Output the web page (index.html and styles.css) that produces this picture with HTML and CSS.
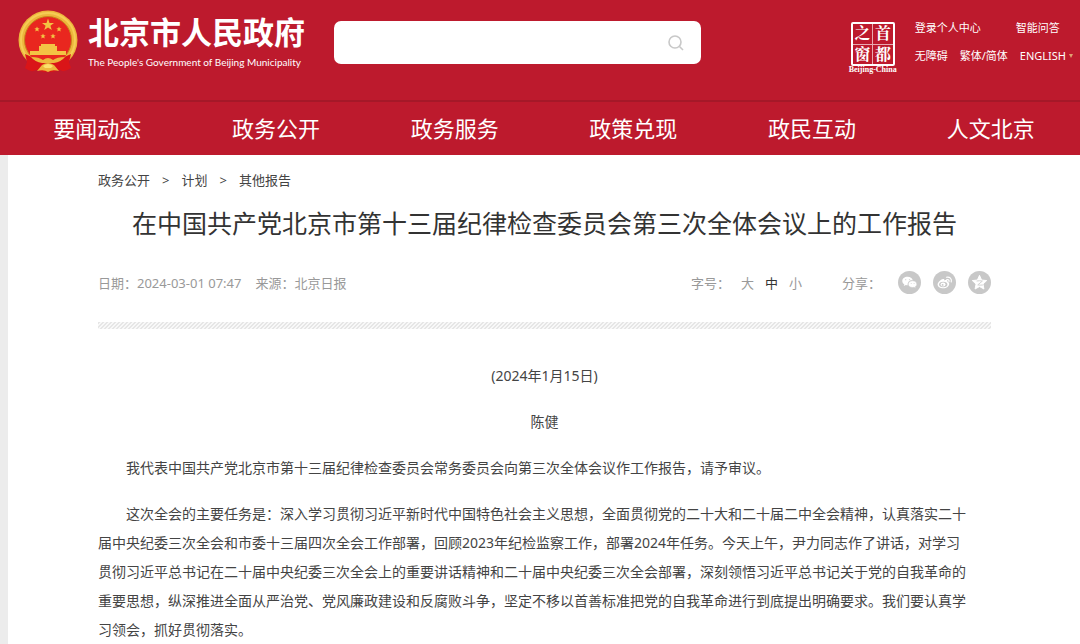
FILE: index.html
```html
<!DOCTYPE html>
<html lang="zh-CN">
<head>
<meta charset="utf-8">
<meta name="viewport" content="width=device-width, initial-scale=1">
<title>在中国共产党北京市第十三届纪律检查委员会第三次全体会议上的工作报告</title>
<link rel="stylesheet" href="styles.css">
</head>
<body>
<header class="site-header">
  <div class="topbar">
    <a class="brand" href="#">
      <svg class="emblem" viewBox="0 0 60 64" aria-hidden="true">
        <circle cx="30" cy="30" r="29.500" fill="#edb63c"/>
        <circle cx="30" cy="30" r="27" fill="none" stroke="#f5cd55" stroke-width="2"/>
        <circle cx="30" cy="30" r="23.500" fill="#e9271f" stroke="#c9851d" stroke-width="1"/>
        <g fill="#f3c344">
          <path d="M30 8.500 L31.500 13 L36 13 L32.400 15.800 L33.800 20 L30 17.500 L26.200 20 L27.600 15.800 L24 13 L28.500 13Z"/>
          <path d="M19 16.500l.8 1.800 1.900.1-1.500 1.200.5 1.900-1.700-1-1.700 1 .5-1.900-1.500-1.200 1.900-.1z"/>
          <path d="M41 16.500l.8 1.800 1.900.1-1.500 1.200.5 1.900-1.700-1-1.700 1 .5-1.900-1.500-1.200 1.900-.1z"/>
          <path d="M25 23.500l.8 1.800 1.900.1-1.500 1.200.5 1.900-1.700-1-1.700 1 .5-1.900-1.500-1.200 1.900-.1z"/>
          <path d="M35 23.500l.8 1.800 1.900.1-1.500 1.200.5 1.900-1.700-1-1.700 1 .5-1.900-1.500-1.200 1.900-.1z"/>
          <path d="M23 34h14v2h2v2H21v-2h2zM21 38h18v3h9v4H12v-4h9z"/>
        </g>
        <path d="M12 45h36l-3 3H15z" fill="#e9271f"/>
        <path d="M7 44 Q14 47 18 49 Q22 47 26 51 L30 53 L34 51 Q38 47 42 49 Q46 47 53 44 L51 52 L53 58 Q46 63 42 60 L34 62 H26 L18 60 Q13 63 7 58 L9 52Z" fill="#da1518"/>
        <path d="M13 47 Q21 47 25 50 Q30 46 35 50 Q39 47 47 47 Q43 52 36 53 H24 Q17 52 13 47Z" fill="#edb83d"/>
        <path d="M19 61 L24 55 Q30 51 36 55 L41 61 Q34 59 30 62 Q26 59 19 61Z" fill="#edb83d"/>
        <path d="M25 56 Q30 52 35 56 L33 58 H27Z" fill="#fbe06c"/>
      </svg>
      <span class="brand-text">
        <span class="brand-cn">北京市人民政府</span>
        <span class="brand-en">The People's Government of Beijing Municipality</span>
      </span>
    </a>
    <form class="search" role="search">
      <input class="search-input" type="text" aria-label="搜索">
      <button class="search-button" type="button" aria-label="搜索">
        <svg viewBox="0 0 16 16" width="16" height="16" fill="none" stroke="#c8c8c8" stroke-width="1.600"><circle cx="7" cy="7" r="6"/><path d="M11.500 11.500L15 15"/></svg>
      </button>
    </form>
    <div class="tools">
      <a class="seal" href="#" aria-label="首都之窗">
        <span class="seal-grid"><span>之</span><span>首</span><span>窗</span><span>都</span></span>
        <span class="seal-name">Beijing-China</span>
      </a>
      <div class="tool-links">
        <div class="tool-row tool-row-wide"><a href="#">登录个人中心</a><a href="#">智能问答</a></div>
        <div class="tool-row"><a href="#">无障碍</a><a href="#">繁体/简体</a><a class="lang" href="#">ENGLISH<span class="caret"></span></a></div>
      </div>
    </div>
  </div>
  <nav class="nav">
    <a href="#">要闻动态</a><a href="#">政务公开</a><a href="#">政务服务</a><a href="#">政策兑现</a><a href="#">政民互动</a><a href="#">人文北京</a>
  </nav>
</header>
<main class="page">
  <nav class="crumbs"><a href="#">政务公开</a><span>&gt;</span><a href="#">计划</a><span>&gt;</span><a href="#">其他报告</a></nav>
  <h1 class="title">在中国共产党北京市第十三届纪律检查委员会第三次全体会议上的工作报告</h1>
  <div class="meta">
    <div class="meta-info"><span>日期：2024-03-01 07:47</span><span>来源：北京日报</span></div>
    <div class="meta-tools">
      <div class="sizes"><span class="sizes-label">字号：</span><button type="button">大</button><button type="button" class="active">中</button><button type="button">小</button></div>
      <div class="share">
        <span class="share-label">分享：</span>
        <a href="#" aria-label="微信"><svg viewBox="0 0 24 24"><circle cx="12" cy="12" r="12" fill="#c8c8c8"/><path d="M10 6c-3.300 0-5.500 1.900-5.500 4.400 0 1.500.8 2.700 2.100 3.500L6 15.700l2.200-1.100c.7.200 1.300.2 2 .2-.6-3.300 2-5.400 5.200-5.200C14.900 7.400 12.700 6 10 6z" fill="#fff"/><path d="M15.200 10.200c-2.700 0-4.500 1.600-4.500 3.500s1.800 3.500 4.500 3.500l1.500-.2 1.700.9-.4-1.500c1-.6 1.600-1.600 1.600-2.700 0-1.900-1.800-3.500-4.400-3.500z" fill="#fff" stroke="#c8c8c8" stroke-width=".5"/><g fill="#d8d8d8"><circle cx="8" cy="9" r=".7"/><circle cx="12" cy="9" r=".7"/><circle cx="13.800" cy="13" r=".6"/><circle cx="16.800" cy="13" r=".6"/></g></svg></a>
        <a href="#" aria-label="微博"><svg viewBox="0 0 24 24"><circle cx="12" cy="12" r="12" fill="#c8c8c8"/><path d="M10.500 8.300c1-.3 1.600.3 1.300 1.600 2-.8 3.700-.6 3.300 1.300 1.500.5 1.800 1.200 1.800 2.200 0 2.500-2.700 4.700-6.200 4.700-3.300 0-5.900-1.500-5.900-3.900 0-2.300 3-5.300 5.700-5.900z" fill="#fff"/><ellipse cx="10.700" cy="14" rx="4.300" ry="2.900" fill="#c8c8c8"/><ellipse cx="10.500" cy="14.200" rx="2.600" ry="2.100" fill="#fff"/><circle cx="10" cy="14.500" r="1" fill="#c8c8c8"/><path d="M14 6.500c3.500-.8 6 1.800 5 5M14.300 8.900c1.800-.3 2.800.8 2.400 2.200" fill="none" stroke="#fff" stroke-width="1.200" stroke-linecap="round"/></svg></a>
        <a href="#" aria-label="QQ空间"><svg viewBox="0 0 24 24"><circle cx="12" cy="12" r="12" fill="#c8c8c8"/><path d="M12 4.500l2.200 4.900 5.300.6-3.900 3.600 1 5.200-4.600-2.600-4.600 2.600 1-5.200L4.500 10l5.300-.6z" fill="#fff" stroke="#fff" stroke-linejoin="round"/><path d="M9 10.500q3-.7 6 0l-4.800 4q2.300.5 5.300.1" fill="none" stroke="#d0d0d0" stroke-width="1"/></svg></a>
      </div>
    </div>
  </div>
  <div class="hatch"></div>
  <article class="article">
    <p class="center">(2024年1月15日)</p>
    <p class="center">陈健</p>
    <p>我代表中国共产党北京市第十三届纪律检查委员会常务委员会向第三次全体会议作工作报告，请予审议。</p>
    <p>这次全会的主要任务是：深入学习贯彻习近平新时代中国特色社会主义思想，全面贯彻党的二十大和二十届二中全会精神，认真落实二十届中央纪委三次全会和市委十三届四次全会工作部署，回顾2023年纪检监察工作，部署2024年任务。今天上午，尹力同志作了讲话，对学习贯彻习近平总书记在二十届中央纪委三次全会上的重要讲话精神和二十届中央纪委三次全会部署，深刻领悟习近平总书记关于党的自我革命的重要思想，纵深推进全面从严治党、党风廉政建设和反腐败斗争，坚定不移以首善标准把党的自我革命进行到底提出明确要求。我们要认真学习领会，抓好贯彻落实。</p>
  </article>
</main>
</body>
</html>
```
FILE: styles.css
```css
* { box-sizing: border-box; }
body {
  margin: 0;
  background: #ececec;
  color: #444;
  font-family: "Noto Sans", "Noto Sans CJK SC", sans-serif;
  font-size: 14px;
  line-height: 29px;
}
a { color: inherit; text-decoration: none; }
button { border: 0; padding: 0; background: none; color: inherit; font: inherit; cursor: pointer; }
svg { display: block; }

.site-header { background: #bd1a2d; color: #fff; }
.topbar {
  display: flex;
  align-items: flex-start;
  padding: 10px 7px 0 18px;
  height: 100px;
}
.brand { display: flex; gap: 10px; width: 316px; flex: none; }
.emblem { width: 60px; height: 64px; }
.brand-text { display: flex; flex-direction: column; white-space: nowrap; }
.brand-cn { font-size: 31px; font-weight: 700; line-height: 44px; }
.brand-en { font-family: Lato, "Open Sans", sans-serif; font-size: 10px; line-height: 16px; }

.search {
  display: flex;
  align-items: center;
  width: 367px;
  height: 43px;
  margin-top: 11px;
  padding-right: 17px;
  background: #fff;
  border-radius: 7px;
}
.search-input { flex: 1; min-width: 0; height: 100%; padding: 0 16px; border: 0; background: none; font: inherit; outline: 0; }

.tools { display: flex; gap: 18px; margin-left: auto; }
.seal { display: flex; flex-direction: column; align-items: center; margin-top: 12px; }
.seal-grid {
  display: grid;
  grid-template-columns: 1fr 1fr;
  gap: 1px;
  width: 44px;
  height: 44px;
  border: 2px solid #fff;
  border-radius: 2px;
  background: linear-gradient(#e9a9b0, #e9a9b0) center / 1px 100% no-repeat, linear-gradient(#e9a9b0, #e9a9b0) center / 100% 1px no-repeat;
  font-family: "Liberation Serif", "Noto Serif CJK SC", "Noto Sans CJK SC", serif;
  font-size: 16px;
  font-weight: 700;
  line-height: 19px;
  text-align: center;
}
.seal-name { font: 700 8px/8px "Liberation Serif", serif; }
.tool-links { display: flex; flex-direction: column; gap: 8px; padding-top: 8px; font-size: 11px; line-height: 20px; white-space: nowrap; }
.tool-row { display: flex; gap: 12px; }
.tool-row-wide { gap: 35px; }
.lang { display: flex; align-items: center; gap: 3px; }
.caret { border: 2px solid transparent; border-top: 4px solid #e0a070; border-bottom: 0; }

.nav {
  display: grid;
  grid-template-columns: repeat(6, 1fr);
  padding: 0 0 0 8px;
  border-top: 2px solid #a51828;
  font-size: 22px;
  line-height: 53px;
  text-align: center;
}

.page { margin-left: 8px; padding: 12px 89px 0 90px; background: #fff; }
.crumbs { display: flex; gap: 12px; font-size: 13px; line-height: 26px; color: #444; }
.title { margin: 13px 0 0; color: #333; font-size: 25px; font-weight: 400; line-height: 34px; text-align: center; }
.meta { display: flex; justify-content: space-between; margin-top: 31px; font-size: 13px; line-height: 24px; color: #999; }
.meta-info { display: flex; gap: 14px; }
.meta-tools { display: flex; gap: 40px; }
.sizes { display: flex; gap: 11px; }
.active { color: #333; }
.share { display: flex; gap: 12px; }
.share-label { margin-right: 5px; }
.share svg { width: 23px; height: 23px; }
.hatch {
  height: 7px;
  margin-top: 27px;
  background: linear-gradient(135deg, #e6e6e6 25%, #f8f8f8 25% 50%, #e6e6e6 50% 75%, #f8f8f8 75%) 0 0 / 4px 4px;
}
.article { padding-top: 32px; }
.article p { margin: 0 0 17px; padding-right: 18px; text-indent: 2em; }
.article p:last-child { margin-bottom: 0; }
.article .center { padding-right: 0; text-align: center; text-indent: 0; }
```
